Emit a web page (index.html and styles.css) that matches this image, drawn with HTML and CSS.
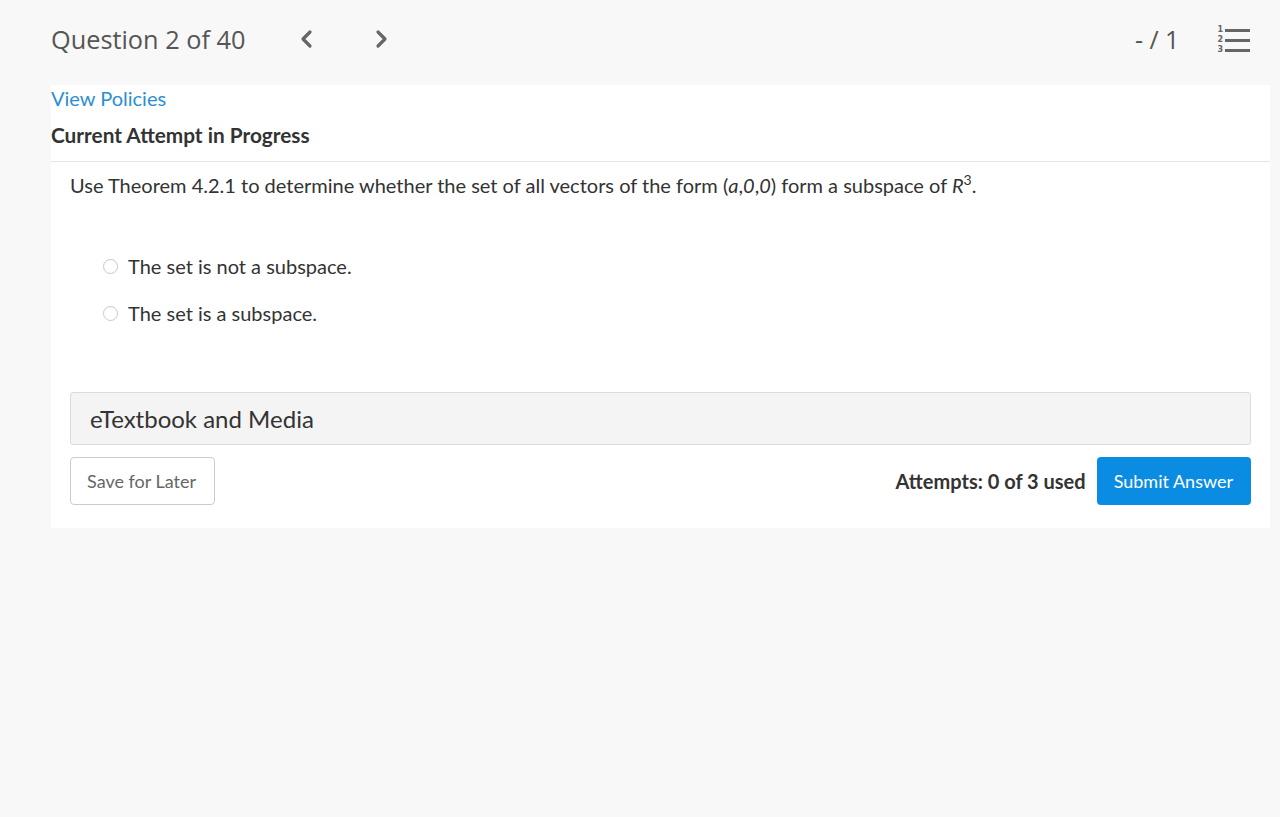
FILE: index.html
```html
<!DOCTYPE html>
<html lang="en">
<head>
  <meta charset="UTF-8">
  <title>Question 2 of 40</title>
  <link rel="stylesheet" href="styles.css">
</head>
<body>
  <!-- Top navigation -->
  <div class="topbar">
    <div class="nav-left">
      <span class="q-title">Question 2 of 40</span>
      <span class="chev">
        <svg width="14" height="22" viewBox="0 0 14 22"><path d="M11 4 L4 11 L11 18" fill="none" stroke="#666" stroke-width="3.2" stroke-linecap="round" stroke-linejoin="round"/></svg>
      </span>
      <span class="chev">
        <svg width="14" height="22" viewBox="0 0 14 22"><path d="M3 4 L10 11 L3 18" fill="none" stroke="#666" stroke-width="3.2" stroke-linecap="round" stroke-linejoin="round"/></svg>
      </span>
    </div>
    <div class="nav-right">
      <span class="score">- / 1</span>
      <div class="list-icon">
        <div class="nums"><span>1</span><span>2</span><span>3</span></div>
        <div class="bars"><i></i><i></i><i></i></div>
      </div>
    </div>
  </div>

  <div class="panel">
    <div class="panel-head">
      <a class="policies" href="#">View Policies</a>
      <div class="attempt-title">Current Attempt in Progress</div>
    </div>

    <div class="question">
      <p class="q-text">Use Theorem 4.2.1 to determine whether the set of all vectors of the form (<i>a</i>,<i>0</i>,<i>0</i>) form a subspace of <i>R</i><sup>3</sup>.</p>

      <div class="options">
        <label class="option"><span class="radio"></span>The set is not a subspace.</label>
        <label class="option"><span class="radio"></span>The set is a subspace.</label>
      </div>

      <div class="media">eTextbook and Media</div>

      <div class="actions">
        <button class="btn-save">Save for Later</button>
        <div class="submit-wrap">
          <span class="attempts">Attempts: 0 of 3 used</span>
          <button class="btn-submit">Submit Answer</button>
        </div>
      </div>
    </div>
  </div>
</body>
</html>
```

FILE: styles.css
```css
body {
  margin: 0;
  background: #f8f8f8;
  font-family: Lato, "Liberation Sans", sans-serif;
  color: #333;
}

.topbar {
  display: flex;
  justify-content: space-between;
  align-items: center;
  height: 80px;
  padding: 0 30px 0 51px;
}

.nav-left {
  display: flex;
  align-items: center;
  margin-top: -2px;
}

.q-title {
  font-family: "Open Sans", sans-serif;
  font-size: 25.3px;
  color: #555;
  margin-right: 54px;
}

.chev {
  display: inline-flex;
  margin-right: 62px;
}

.nav-right {
  display: flex;
  align-items: center;
  margin-top: -2px;
}

.score {
  font-family: "Open Sans", sans-serif;
  font-size: 25px;
  color: #555;
  margin-right: 38px;
}

.list-icon {
  display: flex;
  align-items: center;
  gap: 2px;
  margin-top: 2px;
}

.nums {
  display: flex;
  flex-direction: column;
  font-family: "DejaVu Sans", sans-serif;
  font-weight: bold;
  font-size: 8px;
  line-height: 10px;
  color: #666;
}

.bars {
  display: flex;
  flex-direction: column;
  gap: 7px;
}

.bars i {
  display: block;
  width: 25px;
  height: 3px;
  background: #666;
}

.panel {
  background: #fff;
  margin: 5px 10px 0 51px;
}

.panel-head {
  border-bottom: 1px solid #e5e5e5;
  padding-bottom: 12px;
}

.policies {
  display: block;
  color: #2b8fd1;
  text-decoration: none;
  font-size: 20px;
  line-height: 26px;
}

.attempt-title {
  font-weight: bold;
  font-size: 20.8px;
  line-height: 28px;
  margin-top: 10px;
  color: #333;
}

.question {
  padding: 9px 19px 23px 19px;
}

.q-text {
  margin: 0;
  font-size: 20px;
  line-height: 28px;
}

.q-text sup {
  font-size: 14px;
  line-height: 0;
}

.options {
  margin-top: 53px;
  padding-left: 33px;
}

.option {
  display: flex;
  align-items: center;
  font-size: 20px;
  line-height: 28px;
  margin-bottom: 19px;
}

.radio {
  width: 13px;
  height: 13px;
  border: 1px solid #c8c8c8;
  border-radius: 50%;
  margin-right: 10px;
  background: #fff;
}

.media {
  margin-top: 65px;
  background: #f4f4f4;
  border: 1px solid #dcdcdc;
  border-radius: 3px;
  font-size: 24px;
  line-height: 51px;
  padding-left: 19px;
}

.actions {
  display: flex;
  justify-content: space-between;
  align-items: center;
  margin-top: 12px;
}

.btn-save {
  font-family: Lato, sans-serif;
  font-size: 18px;
  color: #666;
  background: #fff;
  border: 1px solid #ccc;
  border-radius: 4px;
  height: 48px;
  padding: 0 18px 0 16px;
}

.submit-wrap {
  display: flex;
  align-items: center;
}

.attempts {
  font-weight: bold;
  font-size: 20px;
  margin-right: 11px;
}

.btn-submit {
  font-family: Lato, sans-serif;
  font-size: 18px;
  color: #fff;
  background: #0b8ce3;
  border: none;
  border-radius: 4px;
  height: 48px;
  padding: 0 18px 0 17px;
}
```
